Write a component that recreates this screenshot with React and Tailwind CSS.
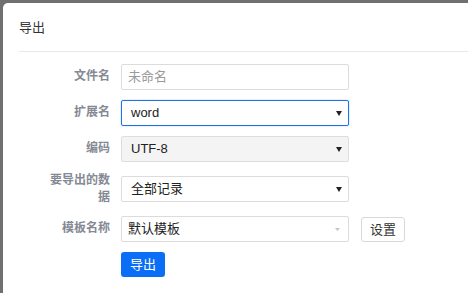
import React from "react";

const FONT = { fontFamily: '"Liberation Sans", "Noto Sans CJK SC", sans-serif' };

function Caret() {
  return (
    <svg width="6" height="5" viewBox="0 0 6 5" className="shrink-0">
      <path d="M0 0 L6 0 L3 5 Z" fill="#222" />
    </svg>
  );
}

function Label({ children, className = "" }) {
  return (
    <div className={`w-[62px] ml-[45px] text-right text-[12px] leading-[17px] font-bold text-[#848994] ${className}`}>
      {children}
    </div>
  );
}

export default function App() {
  return (
    <div className="w-[468px] h-[293px] bg-[#707070] pt-[3px] pl-[3px] overflow-hidden" style={FONT}>
      <div className="bg-white rounded-tl-[5px] w-full h-full">
        <div className="ml-[16px] h-[49px] border-b border-[#e8e8e8] pt-[16px] text-[13px] leading-[17px] text-[#333]">
          导出
        </div>

        <div className="pt-[12px]">
          {/* Row 1 */}
          <div className="flex items-start">
            <Label className="pt-[4px]">文件名</Label>
            <div className="ml-[11px] w-[228px] h-[26px] border border-[#dcdcdc] rounded-[2px] pl-[6px] flex items-center text-[13px] text-[#9a9a9a]">
              未命名
            </div>
          </div>

          {/* Row 2 */}
          <div className="flex items-start mt-[10px]">
            <Label className="pt-[4px]">扩展名</Label>
            <div className="ml-[11px] w-[228px] h-[26px] border border-[#1a73e8] rounded-[2px] shadow-[0_0_2px_rgba(26,115,232,0.35)] pl-[9px] pr-[6px] flex items-center justify-between text-[13px] text-[#222]">
              <span>word</span>
              <Caret />
            </div>
          </div>

          {/* Row 3 */}
          <div className="flex items-start mt-[10px]">
            <Label className="pt-[4px]">编码</Label>
            <div className="ml-[11px] w-[228px] h-[26px] border border-[#dedede] bg-[#f4f4f4] rounded-[2px] pl-[9px] pr-[6px] flex items-center justify-between text-[13px] text-[#222]">
              <span>UTF-8</span>
              <Caret />
            </div>
          </div>

          {/* Row 4 */}
          <div className="flex items-start mt-[10px]">
            <Label>要导出的数据</Label>
            <div className="ml-[11px] mt-[4px] w-[228px] h-[26px] border border-[#dcdcdc] rounded-[2px] pl-[9px] pr-[6px] flex items-center justify-between text-[13px] text-[#222]">
              <span>全部记录</span>
              <Caret />
            </div>
          </div>

          {/* Row 5 */}
          <div className="flex items-start mt-[10px]">
            <Label className="pt-[4px]">模板名称</Label>
            <div className="ml-[11px] w-[228px] h-[26px] border border-[#dcdcdc] rounded-[2px] pl-[6px] pr-[8px] flex items-center justify-between text-[13px] text-[#222]">
              <span>默认模板</span>
              <svg width="5" height="3" viewBox="0 0 5 3">
                <path d="M0 0 L5 0 L2.5 3 Z" fill="#c4c4c4" />
              </svg>
            </div>
            <button className="ml-[12px] mt-[1px] w-[44px] h-[25px] border border-[#d6d8dc] rounded-[3px] bg-white text-[13px] text-[#333] flex items-center justify-center">
              设置
            </button>
          </div>

          {/* Row 6 */}
          <div className="flex mt-[10px] ml-[118px]">
            <button className="w-[44px] h-[25px] rounded-[3px] bg-[#0b6ef6] text-white text-[13px] flex items-center justify-center">
              导出
            </button>
          </div>
        </div>
      </div>
    </div>
  );
}
